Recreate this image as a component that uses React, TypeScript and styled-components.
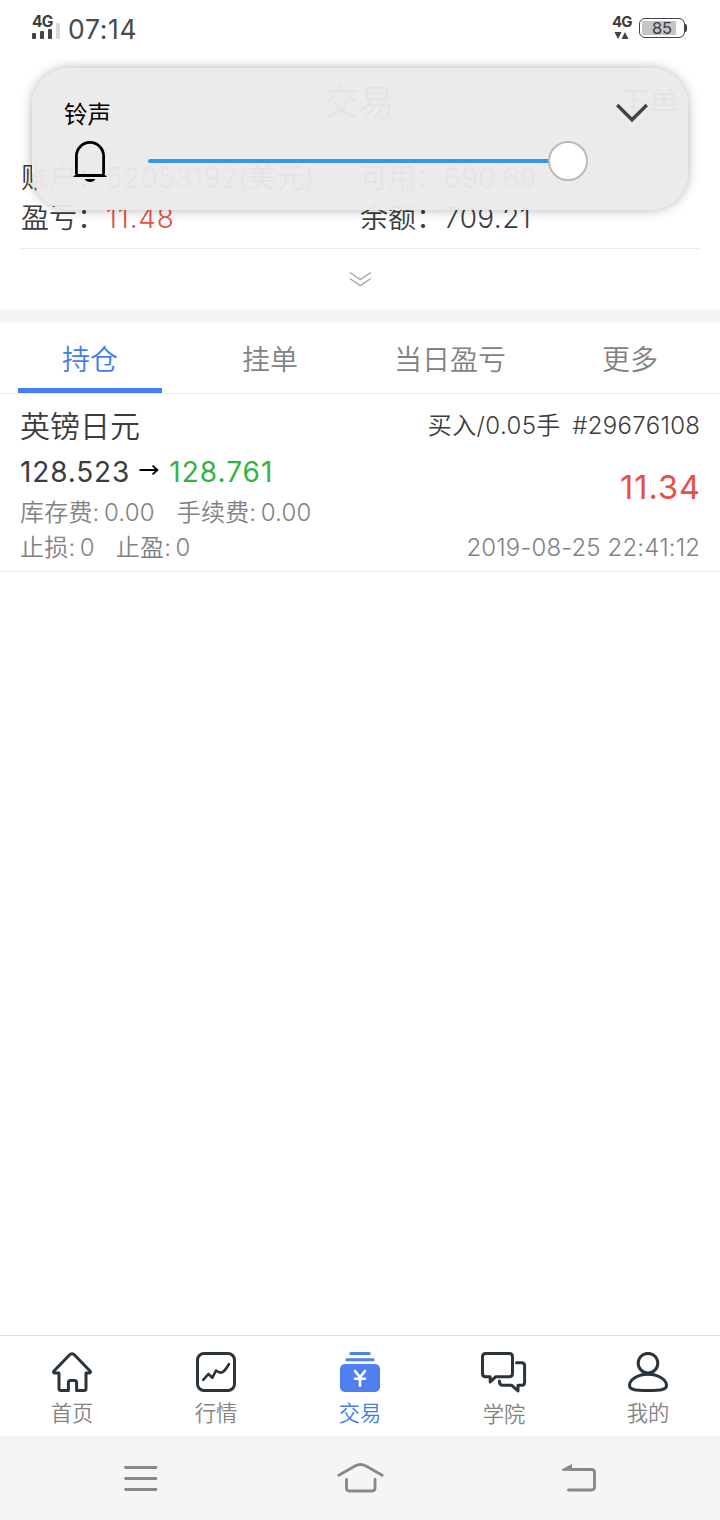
import { ReactElement, ReactNode } from 'react';
import styled, { createGlobalStyle } from 'styled-components';

const GlobalStyle = createGlobalStyle`
  * {
    box-sizing: border-box;
  }

  body {
    margin: 0;
    background: #fff;
    font-family: Inter, 'Noto Sans CJK SC', sans-serif;
    font-weight: 350;
    color: #3c3c3c;
  }

  svg {
    display: block;
    flex-shrink: 0;
    fill: none;
  }
`;

const Screen = styled.div`
  position: relative;
  display: flex;
  flex-direction: column;

  width: 720px;
  height: 1520px;
  overflow: hidden;
`;

const Label = styled.span<{ $size: number; $spacing?: number; $color?: string; $weight?: number }>`
  margin-right: ${(p) => -(p.$spacing ?? 0)}px;

  font-size: ${(p) => p.$size}px;
  letter-spacing: ${(p) => p.$spacing ?? 0}px;
  color: ${(p) => p.$color ?? 'inherit'};
  font-weight: ${(p) => p.$weight ?? 'inherit'};
  white-space: pre;
`;

const Fee = styled.span`
  font-size: 24px;
  word-spacing: -2.6px;
  letter-spacing: 0.2px;
  color: #828282;
`;

/* Status bar */

const StatusBar = styled.header`
  display: flex;
  justify-content: space-between;
  align-items: flex-start;

  height: 60px;
  padding: 14px 33px 0 32px;
`;

const StatusGroup = styled.div`
  display: flex;
  align-items: flex-start;
`;

const Network = styled.div<{ $width: number }>`
  width: ${(p) => p.$width}px;

  svg {
    margin-top: -6px;
  }
`;

const NetworkName = styled.div<{ $size: number }>`
  height: 15px;

  font-size: ${(p) => p.$size}px;
  font-weight: 700;
  line-height: 15px;
  letter-spacing: -0.8px;
`;

const Clock = styled.div`
  margin-left: 8px;

  font-size: 26.5px;
  font-weight: 400;
  line-height: 31px;
  letter-spacing: 0.7px;
  color: #4a4a4a;
`;

const Battery = styled.div`
  display: flex;
  align-items: center;
  justify-content: center;

  width: 46px;
  height: 20px;
  margin-top: 4px;
  border: 1.4px solid #444;
  border-radius: 6px;

  background: linear-gradient(#c6c5c4, #c6c5c4) 2px 2px / 34px 14px no-repeat;

  font-size: 16.5px;
  font-weight: 400;
  line-height: 16px;
`;

const BatteryTip = styled.div`
  width: 2px;
  height: 8px;
  margin-top: 10px;
  border-radius: 0 2px 2px 0;

  background: #444;
`;

/* Account */

const TitleBar = styled.div`
  display: grid;
  grid-template-columns: 1fr auto 1fr;
  align-items: center;

  height: 98px;
  padding: 0 41px 19px 39px;
`;

const TitleAction = styled.div`
  justify-self: end;
`;

const AccountGrid = styled.div`
  display: grid;
  grid-template-columns: 339px 340px;
  grid-auto-rows: 40px;
  align-items: center;

  height: 91px;
  margin: 0 20px;
  padding-left: 1px;
  border-bottom: 1px solid #ececec;

  font-size: 28px;
  line-height: 40px;
`;

const AccountCell = styled.div<{ $gap?: number }>`
  display: flex;
  gap: ${(p) => p.$gap ?? 0}px;

  white-space: pre;
`;

const Expand = styled.div`
  display: flex;
  justify-content: center;
  align-items: center;

  height: 60px;
`;

const Band = styled.div`
  height: 14px;

  background: #f5f5f5;
`;

/* Tabs */

const Tabs = styled.nav`
  display: grid;
  grid-template-columns: repeat(4, 180px);

  height: 71px;
  border-bottom: 1px solid #ececec;
`;

const Tab = styled.div<{ $active?: boolean }>`
  height: 70px;
  margin: 0 18px;
  border-bottom: 5px solid ${(p) => (p.$active ? '#437ef7' : 'transparent')};

  font-size: 28px;
  line-height: 75px;
  text-align: center;
  color: ${(p) => (p.$active ? '#437ee6' : '#828282')};
`;

/* Position */

const Position = styled.section`
  display: flex;
  justify-content: space-between;

  height: 178px;
  padding: 9px 20px 0;
  border-bottom: 1px solid #ececec;
`;

const Column = styled.div<{ $end?: boolean }>`
  display: flex;
  flex-direction: column;
  align-items: ${(p) => (p.$end ? 'flex-end' : 'flex-start')};
`;

const Line = styled.div<{ $height: number; $gap?: number }>`
  display: flex;
  align-items: center;
  gap: ${(p) => p.$gap ?? 0}px;

  height: ${(p) => p.$height}px;

  line-height: ${(p) => p.$height}px;
`;

/* Bottom bars */

const BottomNav = styled.nav`
  display: grid;
  grid-template-columns: repeat(5, 1fr);

  height: 101px;
  margin-top: auto;
  border-top: 1px solid #dedede;
`;

const NavItem = styled.div<{ $active?: boolean }>`
  display: flex;
  flex-direction: column;
  align-items: center;

  padding-top: 16px;

  font-size: 21.3px;
  line-height: 42px;
  color: ${(p) => (p.$active ? '#437ee6' : '#828282')};
`;

const SystemNav = styled.footer`
  display: grid;
  grid-template-columns: repeat(3, 220px);
  justify-content: center;
  justify-items: center;

  height: 84px;
  padding-top: 22px;

  background: #f5f5f5;
`;

/* Volume panel */

const VolumePanel = styled.aside`
  position: absolute;
  top: 68px;
  left: 32px;

  width: 656px;
  height: 142px;
  padding: 25px 40px 0 32px;
  border-radius: 38px;

  background: rgba(234, 234, 234, 0.965);
  box-shadow: 0 0 12px rgba(0, 0, 0, 0.3);
`;

const PanelHead = styled.div`
  display: flex;
  justify-content: space-between;
  align-items: center;

  height: 40px;

  font-size: 23.5px;
  font-weight: 400;
  line-height: 40px;
  color: #000;
`;

const PanelTitle = styled.span`
  padding-top: 3px;
`;

const VolumeRow = styled.div`
  display: flex;
  align-items: center;

  height: 56px;
  padding-left: 8px;
`;

const Track = styled.div`
  width: 402px;
  height: 4px;
  margin-left: 40px;
  border-radius: 2px 0 0 2px;

  background: #3896e8;
`;

const Thumb = styled.div`
  width: 40px;
  height: 40px;
  margin-left: -2px;
  border: 2px solid #bababa;
  border-radius: 50%;

  background: #fff;
`;

interface NavEntry {
  label: string;
  icon: ReactNode;
  active?: boolean;
}

const line = {
  stroke: '#2b333b',
  strokeWidth: 3,
  strokeLinecap: 'round',
  strokeLinejoin: 'round',
} as const;

const systemLine = { ...line, stroke: '#888', strokeWidth: 2.8 };

const NAV: NavEntry[] = [
  {
    label: '首页',
    icon: (
      <svg width="40" height="40" {...line}>
        <path d="M7 21H2.6Q.8 20.5 2 19L17.2 3.2Q20 .4 22.8 3.2L38 19Q39.2 20.5 37.4 21H34V36.5Q34 38.5 32 38.5H24.6V30.5Q24.6 28.5 22.6 28.5H18.4Q16.4 28.5 16.4 30.5V38.5H9Q7 38.5 7 36.5Z" />
      </svg>
    ),
  },
  {
    label: '行情',
    icon: (
      <svg width="40" height="40" {...line}>
        <rect x="1.5" y="1.5" width="37" height="37" rx="6.5" />
        <path d="M7.2 27.8L12.4 22L16.4 25.8L20 18.5Q24 21.5 26.5 20.2T33 12" strokeWidth="2.6" />
      </svg>
    ),
  },
  {
    label: '交易',
    active: true,
    icon: (
      <svg width="40" height="40" {...line} stroke="#5080ec">
        <path d="M10.8 1.6H29.2M6.8 7.7H33.2" />
        <rect y="12" width="40" height="28" rx="5" fill="#5080f0" stroke="none" />
        <path d="M15 19L20 25.3L25 19M20 25.3V33.8M15 26.7H25" stroke="#fff" strokeWidth="2.6" />
      </svg>
    ),
  },
  {
    label: '学院',
    icon: (
      <svg width="46" height="41" {...line}>
        <path d="M4.8 1.5H28.2Q31.5 1.5 31.5 4.8V21.4Q31.5 24.7 28.2 24.7H14.8L9.2 30V24.7H4.8Q1.5 24.7 1.5 21.4V4.8Q1.5 1.5 4.8 1.5Z" />
        <path d="M35.5 10.7H40.6Q43.6 10.7 43.6 13.7V30.3Q43.6 33.3 40.6 33.3H37V39L30.8 33.3H21.8Q18.4 33.3 18.4 29" />
      </svg>
    ),
  },
  {
    label: '我的',
    icon: (
      <svg width="40" height="40" {...line}>
        <circle cx="20" cy="11.2" r="9.8" />
        <path d="M1.5 33.5C1.5 27 10.5 22.3 20 22.3S38.5 27 38.5 33.5C38.5 37.4 34 38.5 20 38.5S1.5 37.4 1.5 33.5Z" />
      </svg>
    ),
  },
];

const TABS = ['持仓', '挂单', '当日盈亏', '更多'];

function Status(): ReactElement {
  return (
    <StatusBar>
      <StatusGroup>
        <Network $width={28}>
          <NetworkName $size={15.5}>4G</NetworkName>
          <svg width="28" height="16">
            <rect y="10" width="4" height="6" rx="1" fill="#444" />
            <rect x="8" y="8" width="4" height="8" rx="1" fill="#444" />
            <rect x="16" y="6" width="4" height="10" rx="1" fill="#444" />
            <rect x="24" width="4" height="16" rx="1" fill="#d9d9d9" />
          </svg>
        </Network>
        <Clock>07:14</Clock>
      </StatusGroup>
      <StatusGroup>
        <Network $width={27}>
          <NetworkName $size={15}>4G</NetworkName>
          <svg width="20" height="16">
            <path d="M2.5 9H9.5L6 16ZM9.5 16H16.5L13 9Z" fill="#444" />
          </svg>
        </Network>
        <Battery>85</Battery>
        <BatteryTip />
      </StatusGroup>
    </StatusBar>
  );
}

function Volume(): ReactElement {
  return (
    <VolumePanel>
      <PanelHead>
        <PanelTitle>铃声</PanelTitle>
        <svg width="32" height="20" stroke="#444" strokeWidth="3.4">
          <path d="M1.2 2L16 16.8L30.8 2" />
        </svg>
      </PanelHead>
      <VolumeRow>
        <svg width="36" height="42" stroke="#000" strokeWidth="2.8">
          <path d="M4.4 34V16A13.6 13.6 0 0 1 31.6 16V34" />
          <path d="M1 37L4 34H32L35 37Z" fill="#000" stroke="none" />
          <path d="M12.5 39H23.5Q21.5 42 18 42T12.5 39Z" fill="#000" stroke="none" />
        </svg>
        <Track />
        <Thumb />
      </VolumeRow>
    </VolumePanel>
  );
}

export default function App(): ReactElement {
  return (
    <Screen>
      <GlobalStyle />
      <Status />
      <TitleBar>
        <span />
        <Label $size={35.5}>交易</Label>
        <TitleAction>
          <Label $size={30}>下单</Label>
        </TitleAction>
      </TitleBar>
      <AccountGrid>
        <AccountCell $gap={1}>账户：<Label $size={28} $spacing={0.3}>52053192(美元)</Label></AccountCell>
        <AccountCell>可用：<Label $size={28} $spacing={0.3}>690.69</Label></AccountCell>
        <AccountCell $gap={1}>盈亏：<Label $size={28} $spacing={0.8} $color="#e64f44">11.48</Label></AccountCell>
        <AccountCell>余额：<Label $size={28} $spacing={0.4}>709.21</Label></AccountCell>
      </AccountGrid>
      <Expand>
        <svg width="22" height="16" stroke="#aaa" strokeWidth="1.5">
          <path d="M.8 1.5L11.3 8.5L21.8 1.5M.8 7.5L11.3 14.5L21.8 7.5" />
        </svg>
      </Expand>
      <Band />
      <Tabs>
        {TABS.map((name, i) => (
          <Tab key={name} $active={i === 0}>{name}</Tab>
        ))}
      </Tabs>
      <Position>
        <Column>
          <Line $height={46}>
            <Label $size={30}>英镑日元</Label>
          </Line>
          <Line $height={46} $gap={10}>
            <Label $size={28} $spacing={0.85} $weight={400}>128.523</Label>
            <svg width="20" height="14" stroke="#000" strokeWidth="1.8">
              <path d="M.5 5H18.5M13.5 .6L18.5 5L13.5 9.4" />
            </svg>
            <Label $size={28} $spacing={1} $weight={400} $color="#35b244">128.761</Label>
          </Line>
          <Line $height={36} $gap={22}>
            <Fee>库存费: 0.00</Fee>
            <Fee>手续费: 0.00</Fee>
          </Line>
          <Line $height={34} $gap={21}>
            <Fee>止损: 0</Fee>
            <Fee>止盈: 0</Fee>
          </Line>
        </Column>
        <Column $end>
          <Line $height={46} $gap={12}>
            <Label $size={24} $spacing={0.4}>买入/0.05手</Label>
            <Label $size={24} $spacing={0.3}>#29676108</Label>
          </Line>
          <Line $height={78}>
            <Label $size={32.5} $spacing={1} $weight={400} $color="#e64f44">11.34</Label>
          </Line>
          <Line $height={42}>
            <Label $size={24} $spacing={0.15} $color="#828282">2019-08-25 22:41:12</Label>
          </Line>
        </Column>
      </Position>
      <BottomNav>
        {NAV.map(({ label, icon, active }) => (
          <NavItem key={label} $active={active}>
            {icon}
            {label}
          </NavItem>
        ))}
      </BottomNav>
      <SystemNav>
        <svg width="48" height="40" {...systemLine}>
          <path d="M9.5 9.5H40M9.5 20.5H40M9.5 31.5H40" />
        </svg>
        <svg width="48" height="40" {...systemLine}>
          <path d="M2.8 17.3L19 8Q24.5 5 30 8L46.2 17.3M10.5 21.5V30Q10.5 33 13.5 33H36Q39 33 39 30V21.5" />
        </svg>
        <svg width="48" height="40" {...systemLine}>
          <path d="M15 11.5H35.5Q38.5 11.5 38.5 14.5V29Q38.5 32 35.5 32H12.5" />
          <path d="M6 12.8V11.2L16 6V12.8Z" fill="#888" stroke="none" />
        </svg>
      </SystemNav>
      <Volume />
    </Screen>
  );
}
